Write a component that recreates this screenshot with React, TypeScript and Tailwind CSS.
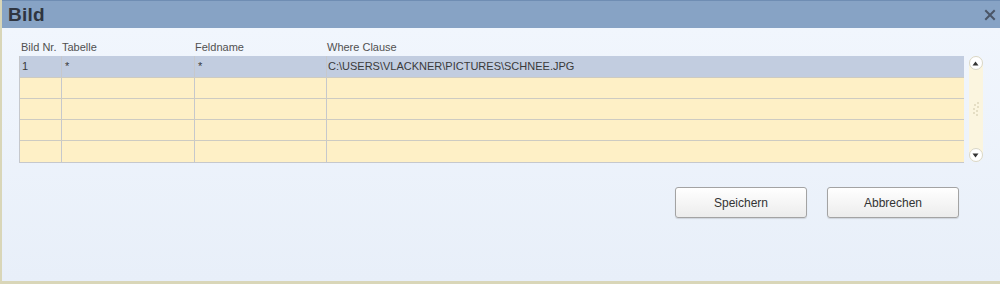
import React from "react";

const rows = [
  { nr: "1", tab: "*", feld: "*", where: "C:\\USERS\\VLACKNER\\PICTURES\\SCHNEE.JPG" },
  { nr: "", tab: "", feld: "", where: "" },
  { nr: "", tab: "", feld: "", where: "" },
  { nr: "", tab: "", feld: "", where: "" },
  { nr: "", tab: "", feld: "", where: "" },
];

export default function App() {
  return (
    <div
      className="w-[1000px] h-[284px] flex flex-col overflow-hidden border-l-2 border-b-[3px] border-[#d9d6b8] bg-[#eaf1fa]"
      style={{ fontFamily: '"Liberation Sans", Arial, sans-serif' }}
    >
      <div className="h-[28px] shrink-0 flex items-center justify-between bg-[#87a3c5] border-t border-[#6f8db3] pl-[6px] pr-[4px]">
        <span className="text-[19px] font-bold text-[#2f3540] leading-none tracking-[0.2px]">Bild</span>
        <svg width="12" height="12" viewBox="0 0 12 12" className="mt-[1px]">
          <path d="M2 2 L10 10 M10 2 L2 10" stroke="#4a5566" strokeWidth="2" strokeLinecap="square" />
        </svg>
      </div>
      <div className="flex-1 flex flex-col bg-gradient-to-b from-[#f1f6fd] to-[#e8eff9] pl-[17px] pr-[16px]">
        <div className="flex mt-[12px]">
          <div className="flex-1 flex flex-col">
            <div className="flex h-[16px] items-end text-[11px] text-[#505050] leading-none pb-[3px]">
              <div className="w-[43px] pl-[2px]">Bild Nr.</div>
              <div className="w-[133px]">Tabelle</div>
              <div className="w-[132px]">Feldname</div>
              <div className="flex-1">Where Clause</div>
            </div>
            <div className="border-l border-b border-[#c6c8cc]">
              {rows.map((r, i) => (
                <div
                  key={i}
                  className={`flex text-[11px] leading-none border-b border-[#cdcbc2] last:border-b-0 ${
                    i === 0 ? "h-[22px] bg-[#c2cde0] text-[#3a3a3a]" : "h-[21px] bg-[#fef0c6]"
                  }`}
                >
                  <div className="w-[42px] border-r border-[#c6c8cc] flex items-center pl-[2px]">{r.nr}</div>
                  <div className="w-[133px] border-r border-[#c6c8cc] flex items-center pl-[3px]">{r.tab}</div>
                  <div className="w-[132px] border-r border-[#c6c8cc] flex items-center pl-[3px]">{r.feld}</div>
                  <div className="flex-1 flex items-center pl-[1px]">{r.where}</div>
                </div>
              ))}
            </div>
          </div>
          <div className="w-[20px] flex flex-col items-center pt-[16px] pl-[3px]">
            <div className="w-[14px] h-[106px] flex flex-col items-center bg-[#fbf5df] rounded-[7px]">
              <div className="w-[14px] h-[14px] rounded-full bg-white border border-[#d8d6c8] flex items-center justify-center">
                <svg width="7" height="5" viewBox="0 0 7 5"><path d="M0.5 4.5 L3.5 0.5 L6.5 4.5 Z" fill="#333" /></svg>
              </div>
              <div className="flex-1 flex items-center justify-center">
                <svg width="8" height="18" viewBox="0 0 8 18">
                  <g fill="#c9c1a2">
                    <circle cx="6" cy="3" r="0.8" />
                    <circle cx="3" cy="5" r="0.8" />
                    <circle cx="6" cy="7" r="0.8" />
                    <circle cx="2" cy="9" r="0.8" />
                    <circle cx="5" cy="11" r="0.8" />
                    <circle cx="2" cy="13" r="0.8" />
                    <circle cx="5" cy="15" r="0.8" />
                  </g>
                </svg>
              </div>
              <div className="w-[14px] h-[14px] rounded-full bg-white border border-[#d8d6c8] flex items-center justify-center">
                <svg width="7" height="5" viewBox="0 0 7 5"><path d="M0.5 0.5 L3.5 4.5 L6.5 0.5 Z" fill="#333" /></svg>
              </div>
            </div>
          </div>
        </div>
        <div className="flex justify-end gap-[20px] mt-[24px] pr-[25px]">
          <button className="w-[132px] h-[31px] rounded-[3px] border border-[#a3a3a3] bg-gradient-to-b from-white to-[#ececec] text-[12px] text-[#333] shadow-[0_1px_1px_rgba(0,0,0,0.12)]">
            Speichern
          </button>
          <button className="w-[132px] h-[31px] rounded-[3px] border border-[#a3a3a3] bg-gradient-to-b from-white to-[#ececec] text-[12px] text-[#333] shadow-[0_1px_1px_rgba(0,0,0,0.12)]">
            Abbrechen
          </button>
        </div>
      </div>
    </div>
  );
}
